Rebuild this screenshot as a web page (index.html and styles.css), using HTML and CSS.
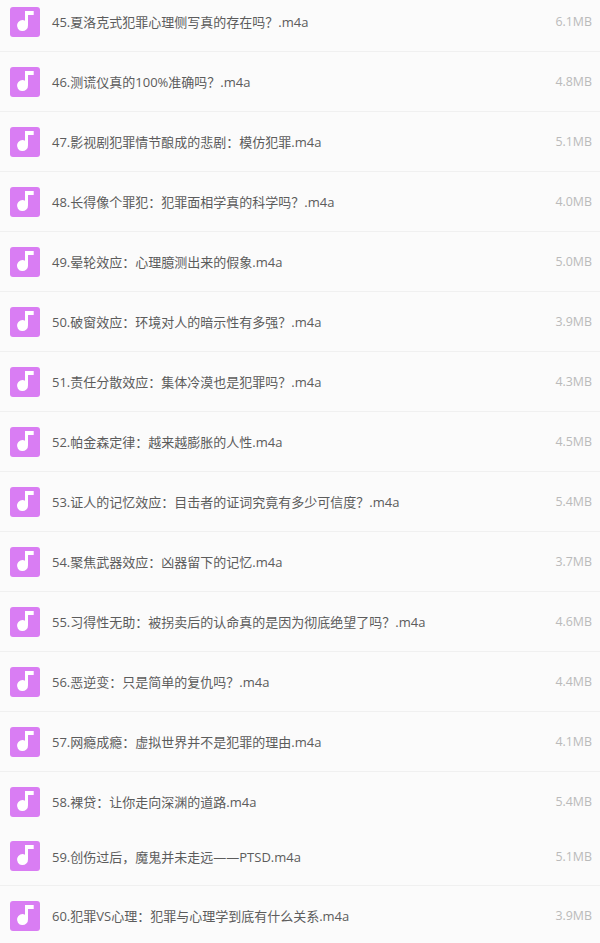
FILE: index.html
```html
<!DOCTYPE html>
<html lang="zh-CN">
<head>
    <meta charset="UTF-8">
    <meta name="viewport" content="width=device-width, initial-scale=1.0">
    <title>音频列表</title>
    <link rel="stylesheet" href="styles.css">
</head>
<body>
<svg class="sprite"><symbol id="audio" viewBox="0 0 30 30"><rect width="30" height="30" rx="3" fill="#d97df3"/><path d="M15 4V13.7A5.5 5.5 0 1 0 18 18.2V8H23.7V4z" fill="#fff"/></symbol></svg>
<ul class="file-list">
    <li class="file-row"><svg class="file-icon"><use href="#audio"/></svg><span class="file-name">45.夏洛克式犯罪心理侧写真的存在吗？.m4a</span><span class="file-size">6.1MB</span></li>
    <li class="file-row"><svg class="file-icon"><use href="#audio"/></svg><span class="file-name">46.测谎仪真的100%准确吗？.m4a</span><span class="file-size">4.8MB</span></li>
    <li class="file-row"><svg class="file-icon"><use href="#audio"/></svg><span class="file-name">47.影视剧犯罪情节酿成的悲剧：模仿犯罪.m4a</span><span class="file-size">5.1MB</span></li>
    <li class="file-row"><svg class="file-icon"><use href="#audio"/></svg><span class="file-name">48.长得像个罪犯：犯罪面相学真的科学吗？.m4a</span><span class="file-size">4.0MB</span></li>
    <li class="file-row"><svg class="file-icon"><use href="#audio"/></svg><span class="file-name">49.晕轮效应：心理臆测出来的假象.m4a</span><span class="file-size">5.0MB</span></li>
    <li class="file-row"><svg class="file-icon"><use href="#audio"/></svg><span class="file-name">50.破窗效应：环境对人的暗示性有多强？.m4a</span><span class="file-size">3.9MB</span></li>
    <li class="file-row"><svg class="file-icon"><use href="#audio"/></svg><span class="file-name">51.责任分散效应：集体冷漠也是犯罪吗？.m4a</span><span class="file-size">4.3MB</span></li>
    <li class="file-row"><svg class="file-icon"><use href="#audio"/></svg><span class="file-name">52.帕金森定律：越来越膨胀的人性.m4a</span><span class="file-size">4.5MB</span></li>
    <li class="file-row"><svg class="file-icon"><use href="#audio"/></svg><span class="file-name">53.证人的记忆效应：目击者的证词究竟有多少可信度？.m4a</span><span class="file-size">5.4MB</span></li>
    <li class="file-row"><svg class="file-icon"><use href="#audio"/></svg><span class="file-name">54.聚焦武器效应：凶器留下的记忆.m4a</span><span class="file-size">3.7MB</span></li>
    <li class="file-row"><svg class="file-icon"><use href="#audio"/></svg><span class="file-name">55.习得性无助：被拐卖后的认命真的是因为彻底绝望了吗？.m4a</span><span class="file-size">4.6MB</span></li>
    <li class="file-row"><svg class="file-icon"><use href="#audio"/></svg><span class="file-name">56.恶逆变：只是简单的复仇吗？.m4a</span><span class="file-size">4.4MB</span></li>
    <li class="file-row"><svg class="file-icon"><use href="#audio"/></svg><span class="file-name">57.网瘾成瘾：虚拟世界并不是犯罪的理由.m4a</span><span class="file-size">4.1MB</span></li>
    <li class="file-row row-cut"><svg class="file-icon"><use href="#audio"/></svg><span class="file-name">58.裸贷：让你走向深渊的道路.m4a</span><span class="file-size">5.4MB</span></li>
    <li class="file-row row-short"><svg class="file-icon"><use href="#audio"/></svg><span class="file-name">59.创伤过后，魔鬼并未走远——PTSD.m4a</span><span class="file-size">5.1MB</span></li>
    <li class="file-row"><svg class="file-icon"><use href="#audio"/></svg><span class="file-name">60.犯罪VS心理：犯罪与心理学到底有什么关系.m4a</span><span class="file-size">3.9MB</span></li>
</ul>
</body>
</html>
```

FILE: styles.css
```css
html, body {
    margin: 0;
    padding: 0;
    height: 943px;
    overflow: hidden;
    background: #fbfbfb;
}

body {
    font-family: "Open Sans", "Noto Sans CJK SC", sans-serif;
    color: #5c5c5c;
}

.sprite {
    display: none;
}

.file-list {
    list-style-type: none;
    margin: -8px 0 0;
    padding: 0;
}

.file-row {
    display: flex;
    align-items: center;
    height: 59px;
    padding: 0 8px 0 10px;
    border-bottom: 1px solid #f0f0f0;
}

/* the last rows of the capture are stitched, so they differ in height */
.row-cut {
    border-bottom: 0;
    height: 59px;
    padding-bottom: 1px;
}

.row-short {
    height: 48px;
    padding-bottom: 5px;
}

.file-icon {
    width: 30px;
    height: 30px;
    flex-shrink: 0;
}

.file-name {
    flex: 1;
    margin-left: 12px;
    font-size: 13px;
}

.file-size {
    font-size: 12.4px;
    color: #bababa;
}
```
